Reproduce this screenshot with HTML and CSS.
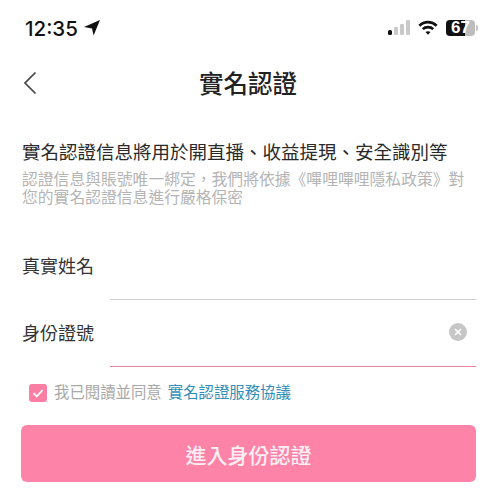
FILE: index.html
```html
<!DOCTYPE html>
<html lang="zh-Hant">
<head>
  <meta charset="UTF-8">
  <meta name="viewport" content="width=device-width, initial-scale=1">
  <title>實名認證</title>
  <link rel="stylesheet" href="styles.css">
</head>
<body>

  <!-- 狀態列 -->
  <div class="status-bar">
    <div class="status-left">
      <span class="clock">12:35</span>
      <svg class="arrow" width="16" height="16" viewBox="0 0 16 16"><path d="M16 0 L9.6 15.6 L8 8.4 L0 7 Z" fill="#111"/></svg>
    </div>
    <div class="status-right">
      <svg width="22" height="16" viewBox="0 0 22 16">
        <rect x="0" y="10" width="4" height="5" rx="1.5" fill="#111"/>
        <rect x="6" y="7" width="4" height="8" rx="1.2" fill="#c9c9c9"/>
        <rect x="12" y="4" width="4" height="11" rx="1.2" fill="#c9c9c9"/>
        <rect x="18" y="0" width="4" height="15" rx="1.2" fill="#c9c9c9"/>
      </svg>
      <svg width="20" height="16" viewBox="0 0 21 16" fill="none" stroke="#111" stroke-width="2.8">
        <path d="M1.4 5.6 C6.6 .6 14.4 .6 19.6 5.6"/>
        <path d="M5 9.2 C8 6.4 13 6.4 16 9.2"/>
        <path d="M10.5 15 L7.9 12.2 C9.4 11 11.6 11 13.1 12.2 Z" fill="#111" stroke="none"/>
      </svg>
      <div class="battery">
        <div class="battery-body"><span class="battery-fill"></span><span class="battery-num">67</span></div>
        <span class="battery-cap"></span>
      </div>
    </div>
  </div>

  <!-- 標題列 -->
  <header class="nav-bar">
    <svg class="back" width="14" height="24" viewBox="0 0 14 24" fill="none" stroke="#444" stroke-width="1.7"><path d="M12.5 1.5 L2 12 L12.5 22.5"/></svg>
    <h1>實名認證</h1>
  </header>

  <section class="intro">
    <h2>實名認證信息將用於開直播<span class="punct">、</span>收益提現<span class="punct">、</span>安全識別等</h2>
    <p>認證信息與賬號唯一綁定&#xFF0C;我們將依據《嗶哩嗶哩隱私政策》對您的實名認證信息進行嚴格保密</p>
  </section>

  <form class="form">
    <div class="row">
      <label>真實姓名</label>
      <div class="field"></div>
    </div>
    <div class="row">
      <label>身份證號</label>
      <div class="field active">
        <svg class="clear" width="18" height="18" viewBox="0 0 18 18">
          <circle cx="9" cy="9" r="9" fill="#c6c6c6"/>
          <path d="M6 6 L12 12 M12 6 L6 12" stroke="#fff" stroke-width="1.6"/>
        </svg>
      </div>
    </div>
  </form>

  <div class="agree">
    <span class="checkbox">
      <svg width="18" height="18" viewBox="0 0 18 18" fill="none" stroke="#fff" stroke-width="1.8"><path d="M4.5 9.2 L7.8 12.4 L13.6 6"/></svg>
    </span>
    <span class="agree-text">我已閱讀並同意</span>
    <a class="agree-link" href="#">實名認證服務協議</a>
  </div>

  <div class="actions">
    <button class="btn" type="button">進入身份認證</button>
  </div>

</body>
</html>
```

FILE: styles.css
```css
/* 全域 */
body {
  margin: 0;
  background: #fff;
  color: #222;
  font-family: "Liberation Sans", "Noto Sans CJK TC", sans-serif;
}
.punct {
  font-family: "Noto Sans CJK SC", sans-serif;
}

/* 狀態列 */
.status-bar {
  display: flex;
  justify-content: space-between;
  align-items: center;
  height: 20px;
  padding: 18px 17px 0 25px;
}
.status-left {
  display: flex;
  align-items: center;
  gap: 6px;
}
.clock {
  font-family: Inter, sans-serif;
  font-size: 20.5px;
  font-weight: 500;
  color: #111;
}
.status-right {
  display: flex;
  align-items: center;
  gap: 8px;
}
.battery {
  display: flex;
  align-items: center;
  gap: 1px;
}
.battery-body {
  position: relative;
  width: 29px;
  height: 16px;
  border-radius: 4px;
  background: #bdbdbd;
}
.battery-fill {
  display: block;
  width: 19px;
  height: 100%;
  border-radius: 4px 0 0 4px;
  background: #111;
}
.battery-num {
  position: absolute;
  top: 0;
  left: 5px;
  font-size: 17px;
  line-height: 16px;
  font-weight: bold;
  color: #fff;
}
.battery-cap {
  width: 2px;
  height: 6px;
  border-radius: 0 2px 2px 0;
  background: #c4c4c4;
}

/* 標題列 */
.nav-bar {
  position: relative;
  margin-top: 24px;
  height: 40px;
  display: flex;
  align-items: center;
  justify-content: center;
  padding-left: 1px;
}
.nav-bar h1 {
  margin: 0;
  font-size: 24.5px;
  font-weight: 500;
  color: #222;
}
.back {
  position: absolute;
  left: 23px;
  top: 9px;
}

/* 說明 */
.intro {
  margin-top: 36px;
  padding: 0 19px 0 22px;
}
.intro h2 {
  margin: 0;
  font-size: 18.5px;
  line-height: 26px;
  font-weight: 400;
  color: #2a2a2a;
  white-space: nowrap;
}
.intro p {
  margin: 5px 0 0;
  font-size: 15.8px;
  line-height: 18px;
  color: #b4b4b4;
}

/* 表單 */
.form {
  margin-top: 34px;
  padding: 0 19px 0 22px;
}
.row {
  display: flex;
  height: 67px;
  align-items: flex-start;
}
.row label {
  width: 88px;
  padding-top: 13px;
  font-size: 18px;
  line-height: 26px;
  color: #333;
}
.field {
  flex: 1;
  position: relative;
  height: 59px;
  box-sizing: border-box;
  border-bottom: 1px solid #cfcfcf;
}
.field.active {
  border-bottom-color: #e8809c;
}
.clear {
  position: absolute;
  right: 9px;
  top: 15px;
}

/* 同意條款 */
.agree {
  display: flex;
  align-items: center;
  margin-top: 9px;
  padding-left: 29px;
  font-size: 15.4px;
  line-height: 18px;
}
.checkbox {
  width: 18px;
  height: 18px;
  margin-right: 7px;
  border-radius: 3px;
  background: #fb7ea4;
}
.checkbox svg {
  display: block;
}
.agree-text {
  color: #a8a8a8;
  margin-right: 6px;
}
.agree-link {
  color: #2f8fb8;
  text-decoration: none;
}

/* 按鈕 */
.actions {
  margin-top: 23px;
  padding: 0 19px 0 21px;
}
.btn {
  display: block;
  width: 100%;
  height: 57px;
  border: none;
  border-radius: 6px;
  background: #fe83a9;
  color: rgba(255,255,255,0.9);
  font-family: inherit;
  font-size: 21px;
  font-weight: 500;
}
```
